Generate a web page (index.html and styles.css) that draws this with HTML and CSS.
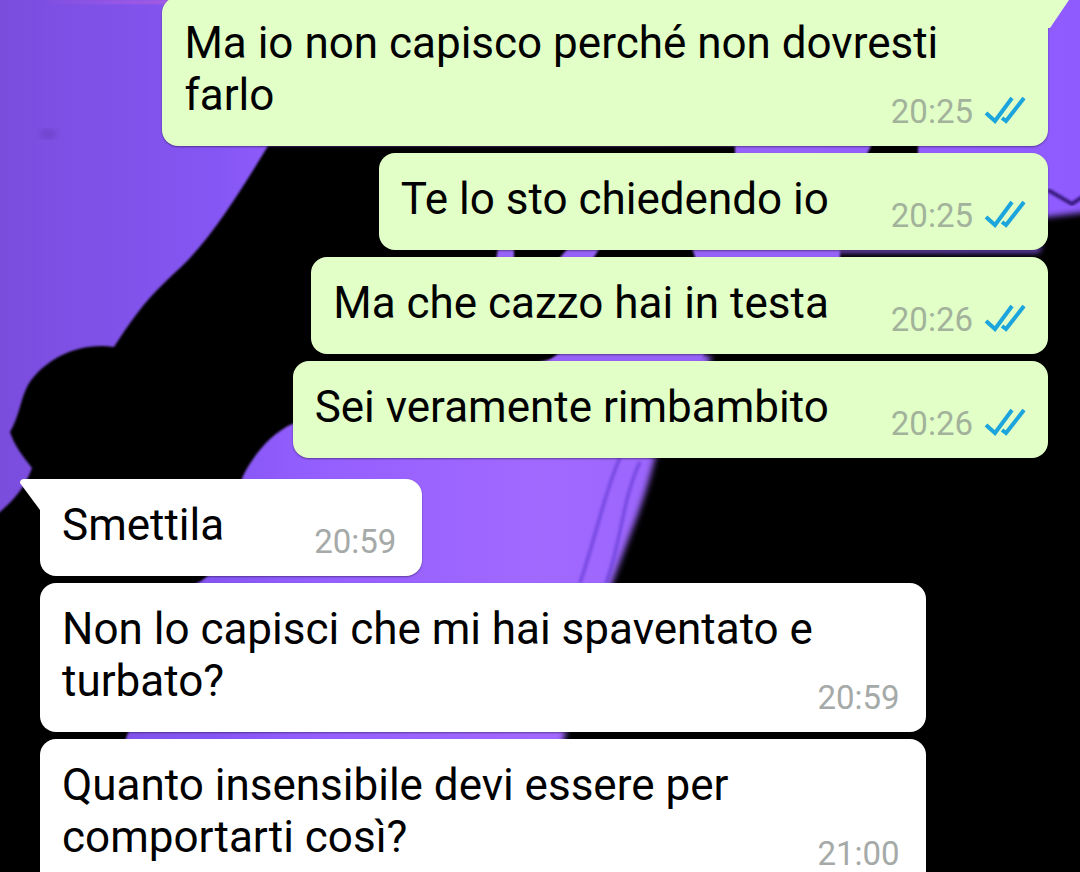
FILE: index.html
```html
<!DOCTYPE html>
<html lang="it">
<head>
    <meta charset="UTF-8">
    <meta name="viewport" content="width=device-width, initial-scale=1.0">
    <title>Chat</title>
    <link rel="stylesheet" href="styles.css">
</head>
<body>
    <svg class="wallpaper" viewBox="0 0 1080 872" preserveAspectRatio="xMidYMid slice" aria-hidden="true">
        <defs>
            <linearGradient id="sky" x1="0" y1="0" x2="1" y2="0">
                <stop offset="0" stop-color="#7b4ddd"/>
                <stop offset="0.2" stop-color="#8656f4"/>
                <stop offset="0.3" stop-color="#955fff"/>
                <stop offset="0.5" stop-color="#a269ff"/>
                <stop offset="0.7" stop-color="#9662f8"/>
                <stop offset="1" stop-color="#8f5bff"/>
            </linearGradient>
            <linearGradient id="glow" x1="0" y1="0" x2="1" y2="0">
                <stop offset="0" stop-color="#a85be0" stop-opacity="0"/>
                <stop offset="1" stop-color="#a85be0"/>
            </linearGradient>
            <filter id="soft"><feGaussianBlur stdDeviation="1"/></filter>
            <filter id="softer"><feGaussianBlur stdDeviation="3"/></filter>
        </defs>
        <rect width="1080" height="872" fill="url(#sky)"/>
        <rect x="40" width="130" height="4" fill="url(#glow)" filter="url(#soft)"/>
        <ellipse cx="48" cy="134" rx="9" ry="5" fill="#7044cc" filter="url(#softer)"/>
        <!-- strands of hair -->
        <path class="strand" filter="url(#soft)" d="M620 458 C605 490 598 530 580 583 M640 462 C622 500 622 540 606 583"/>
        <path class="strand dark" filter="url(#soft)" d="M1048 190 L1072 204 L1084 196"/>
        <!-- arm and shoulder -->
        <path class="shadow" filter="url(#soft)" d="M268 146 C240 192 210 240 180 268 C145 300 135 315 114 347 C80 342 45 358 28 385 C20 400 20 415 10 432 C14 445 24 458 32 468 C24 490 12 502 -5 516 V880 H120 L126 738 L186 586 C230 582 225 510 245 472 C258 448 275 432 292 424 L560 357 L735 250 V146 Z"/>
        <!-- body -->
        <path class="shadow" filter="url(#softer)" d="M700 353 L712 357 L655 458 C650 480 640 510 632 530 L612 583 L564 738 L540 880 H1090 V212 L1040 218 V252 H760 Z"/>
        <path class="shadow" filter="url(#soft)" d="M874 140 H918 V160 H864 Z"/>
        <!-- light between the fingers -->
        <path filter="url(#soft)" fill="#9662f8" d="M498 248 H514 V260 H496 Z M568 248 H600 L592 260 H558 Z M692 248 H840 V260 H696 Z M560 352 H705 L698 364 H545 Z"/>
    </svg>

    <main class="chat">
        <div class="bubble out tail">
            <p class="text">Ma io non capisco perché non dovresti farlo<span class="meta"><time>20:25</time><svg class="ticks" viewBox="0 0 42 28"><path d="M2 17 L11 25 L28 2 M18 22 L22 25 L40 2"/></svg></span></p>
        </div>
        <div class="bubble out">
            <p class="text">Te lo sto chiedendo io<span class="meta"><time>20:25</time><svg class="ticks" viewBox="0 0 42 28"><path d="M2 17 L11 25 L28 2 M18 22 L22 25 L40 2"/></svg></span></p>
        </div>
        <div class="bubble out">
            <p class="text">Ma che cazzo hai in testa<span class="meta"><time>20:26</time><svg class="ticks" viewBox="0 0 42 28"><path d="M2 17 L11 25 L28 2 M18 22 L22 25 L40 2"/></svg></span></p>
        </div>
        <div class="bubble out">
            <p class="text">Sei veramente rimbambito<span class="meta"><time>20:26</time><svg class="ticks" viewBox="0 0 42 28"><path d="M2 17 L11 25 L28 2 M18 22 L22 25 L40 2"/></svg></span></p>
        </div>
        <div class="bubble in tail">
            <p class="text">Smettila<span class="meta"><time>20:59</time></span></p>
        </div>
        <div class="bubble in">
            <p class="text">Non lo capisci che mi hai spaventato e turbato?<span class="meta"><time>20:59</time></span></p>
        </div>
        <div class="bubble in">
            <p class="text">Quanto insensibile devi essere per comportarti così?<span class="meta"><time>21:00</time></span></p>
        </div>
    </main>
</body>
</html>
```
FILE: styles.css
```css
* {
    box-sizing: border-box;
}

body {
    margin: 0;
    height: 100vh;
    overflow: hidden;
    background: #000;
    font-family: Roboto, "Liberation Sans", sans-serif;
}

.wallpaper {
    position: absolute;
    top: 0;
    left: 0;
    width: 100%;
    height: 100%;
}

.shadow {
    fill: #030206;
}

.strand {
    fill: none;
    stroke: #7c4de6;
    stroke-width: 4;
}

.dark {
    stroke: #3a1d80;
}

/* scrolled a little past the first message */
.chat {
    position: relative;
    display: flex;
    flex-direction: column;
    gap: 7px;
    margin-top: -3px;
    padding: 0 32px 0 40px;
}

.bubble {
    position: relative;
    max-width: 82vw;
    padding: 20px 22px 25px;
    border-radius: 16px;
    box-shadow: 0 1px 2px rgba(0, 0, 0, 0.4);
}

.out {
    align-self: flex-end;
    background: #e1ffc7;
}

.in {
    align-self: flex-start;
    padding-right: 26px;
    background: #fff;
}

.text {
    margin: 0;
    color: #000;
    font-size: 44px;
    line-height: 52px;
}

/* floats beside the last line, hanging a little below it */
.meta {
    float: right;
    display: flex;
    align-items: center;
    gap: 11px;
    margin: 23px 0 -11px 90px;
    color: #a5aaa8;
    font-size: 33px;
    line-height: 40px;
}

.out .meta {
    margin-left: 62px;
    color: #a3b29b;
}

.ticks {
    width: 42px;
    height: 28px;
    margin-bottom: 4px;
    fill: none;
    stroke: #1ba5dc;
    stroke-width: 4;
}

/* tails */
.tail::before {
    content: "";
    position: absolute;
    top: 0;
    width: 40px;
    height: 31px;
    background: inherit;
}

.out.tail::before {
    right: -21px;
    clip-path: polygon(0 0, 100% 0, 100% 3px, 21px 100%, 0 100%);
}

.in.tail {
    margin-top: 14px;
}

.in.tail::before {
    left: -20px;
    border-top-left-radius: 4px;
    clip-path: polygon(0 0, 100% 0, 100% 100%, 20px 100%, 0 4px);
}
```
